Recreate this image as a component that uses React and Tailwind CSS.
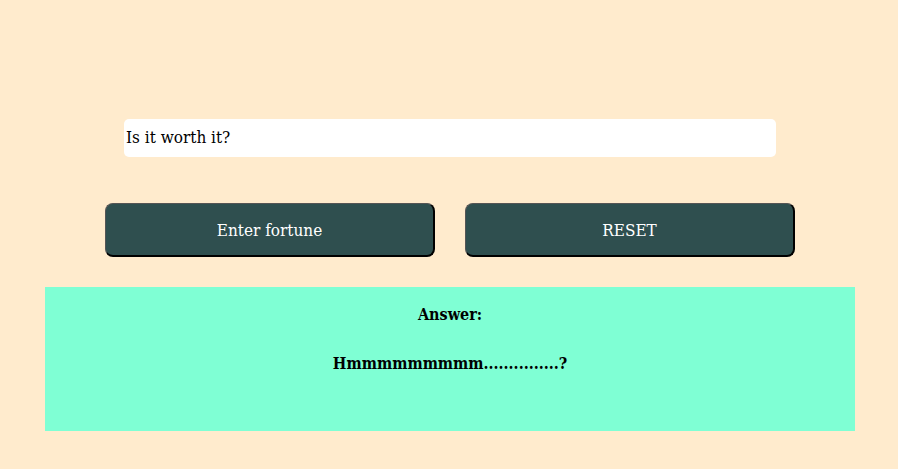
import React from "react";

export default function App() {
  return (
    <div
      className="w-[898px] h-[469px] bg-[#ffebcd] flex flex-col items-center pl-[2px]"
      style={{ fontFamily: '"DejaVu Serif Condensed", "DejaVu Serif", serif' }}
    >
      <div className="mt-[119px] w-[652px] h-[38px] bg-white rounded-[5px] flex items-center pl-[2px] text-[17px] text-black">
        Is it worth it?
      </div>
      <div className="mt-[46px] flex gap-[30px]">
        <button className="w-[330px] h-[54px] pt-[3px] bg-[#2f4f4f] text-white text-[17px] rounded-[8px] border-t border-l border-t-[#555] border-l-[#555] border-b-2 border-r-2 border-b-black border-r-black">
          Enter fortune
        </button>
        <button className="w-[330px] h-[54px] pt-[3px] bg-[#2f4f4f] text-white text-[17px] rounded-[8px] border-t border-l border-t-[#555] border-l-[#555] border-b-2 border-r-2 border-b-black border-r-black">
          RESET
        </button>
      </div>
      <div className="mt-[30px] w-[810px] h-[144px] bg-[#7fffd4] flex flex-col items-center text-black font-bold text-[16px]">
        <div className="mt-[16px]">Answer:</div>
        <div className="mt-[25px]">Hmmmmmmmmm...............?</div>
      </div>
    </div>
  );
}
